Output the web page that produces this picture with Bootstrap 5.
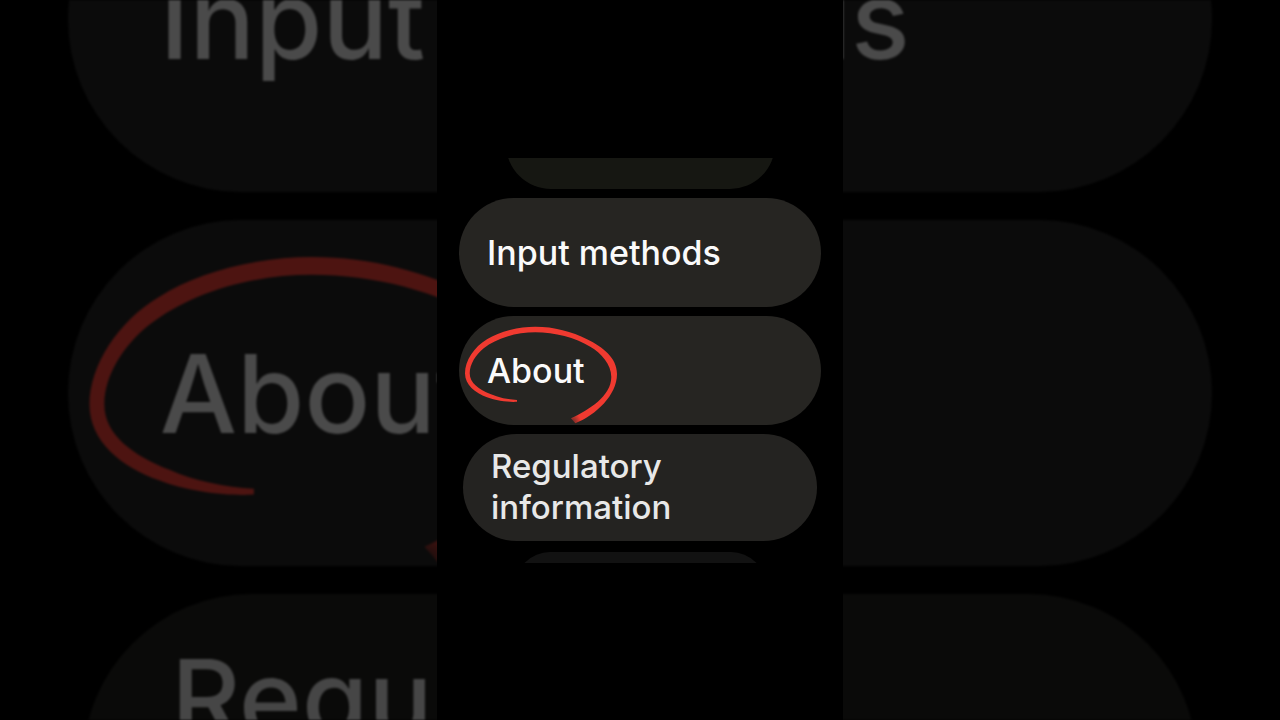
<!DOCTYPE html>
<html lang="en">
<head>
<meta charset="utf-8">
<meta name="viewport" content="width=device-width, initial-scale=1">
<title>Settings</title>
<link href="https://cdn.jsdelivr.net/npm/bootstrap@5.3.0/dist/css/bootstrap.min.css" rel="stylesheet">
<style>
  body { background: #000; font-family: Inter, "Open Sans", sans-serif; font-weight: 500; }
  .pill { position: relative; flex-shrink: 0; border: 0; text-align: left; font-weight: 500; }
  .ring { position: absolute; inset: 0; width: 100%; height: 100%; overflow: visible; pointer-events: none; }

  .backdrop { gap: 28px; padding-top: 58px; filter: blur(1px); }
  .backdrop .pill { width: 89.4%; height: 346px; padding: 0 92px; background: #0b0b0b; color: #4a4a4a; font-size: 109px; line-height: 129px; }
  .backdrop .pill.pill-far { width: 87%; height: 338px; padding: 0 88px; background: #0a0a09; color: #464646; font-size: 107px; }
  .backdrop .ring { color: #4d1411; }

  .phone { max-width: 406px; background: #000; }
  .watch { height: 405px; gap: 9px; }
  .watch .pill { width: 362px; max-width: 90%; height: 109px; padding: 0 28px; background: #262522; color: #fafafa; font-size: 34px; line-height: 41px; }
  .watch .pill.pill-far { width: 354px; height: 107px; background: #242321; color: #e8e8e8; font-size: 33px; }
  .watch .pill.pill-above { width: 269px; height: 90px; background: #161712; }
  .watch .pill.pill-below { width: 251px; height: 70px; margin-top: 2px; background: #121212; }
  .watch .ring { color: #f03a30; }
</style>
</head>
<body>
<main class="position-relative vh-100 overflow-hidden">
  <!-- enlarged, dimmed copy of the list behind the phone -->
  <div class="backdrop position-absolute top-0 start-0 w-100 h-100 d-flex flex-column align-items-center justify-content-center overflow-hidden" aria-hidden="true">
    <div class="pill rounded-pill d-flex align-items-center text-nowrap">Input methods</div>
    <div class="pill rounded-pill d-flex align-items-center text-nowrap">About
      <svg class="ring" viewBox="-.8 -.8 362 109">
        <defs><radialGradient id="ink-dim" gradientUnits="userSpaceOnUse" cx="113" cy="106" r="9"><stop offset="0" stop-color="#4d1411" stop-opacity=".2"/><stop offset="1" stop-color="#4d1411"/></radialGradient></defs>
        <path fill="url(#ink-dim)" d="M58 85.8C51 86.4 37 85 28 81.3C16 77 6 69 6 57.3C6 45 15 31 28 23.3C41 15 60 10.7 76.3 10.7C95 10.7 113 15.5 128 23.3C144 31 158 42 158 58C158 79 137 99 116.3 107.3L112 102.3C130 94 152.3 80 152.3 61C152.3 48 142 37 131.3 30.7C116 21.5 96 16.3 76.3 16.3C57 16.3 38 22 24.7 32.3C17 38.5 10.7 48 10.7 57.3C10.7 67 20 73.5 31.3 78C39 81.5 49 83.5 58 84Z"/></svg>
    </div>
    <div class="pill pill-far rounded-pill d-flex align-items-center text-nowrap">Regulatory<br>information</div>
  </div>

  <div class="phone position-relative w-100 h-100 mx-auto d-flex flex-column justify-content-center">
    <nav class="watch d-flex flex-column align-items-center justify-content-center overflow-hidden" aria-label="Settings">
      <div class="pill pill-above rounded-pill"></div>
      <button type="button" class="pill rounded-pill">Input methods</button>
      <button type="button" class="pill rounded-pill">About
        <svg class="ring" viewBox="0 0 362 109" aria-hidden="true">
          <defs><radialGradient id="ink" gradientUnits="userSpaceOnUse" cx="113" cy="106" r="9"><stop offset="0" stop-color="#f03a30" stop-opacity=".3"/><stop offset="1" stop-color="#f03a30"/></radialGradient></defs>
          <path fill="url(#ink)" d="M58 85.8C51 86.4 37 85 28 81.3C16 77 6 69 6 57.3C6 45 15 31 28 23.3C41 15 60 10.7 76.3 10.7C95 10.7 113 15.5 128 23.3C144 31 158 42 158 58C158 79 137 99 116.3 107.3L112 102.3C130 94 152.3 80 152.3 61C152.3 48 142 37 131.3 30.7C116 21.5 96 16.3 76.3 16.3C57 16.3 38 22 24.7 32.3C17 38.5 10.7 48 10.7 57.3C10.7 67 20 73.5 31.3 78C39 81.5 49 83.5 58 84Z"/></svg>
      </button>
      <button type="button" class="pill pill-far rounded-pill">Regulatory information</button>
      <div class="pill pill-below rounded-pill"></div>
    </nav>
  </div>
</main>
<script src="https://cdn.jsdelivr.net/npm/bootstrap@5.3.0/dist/js/bootstrap.bundle.min.js"></script>
</body>
</html>
